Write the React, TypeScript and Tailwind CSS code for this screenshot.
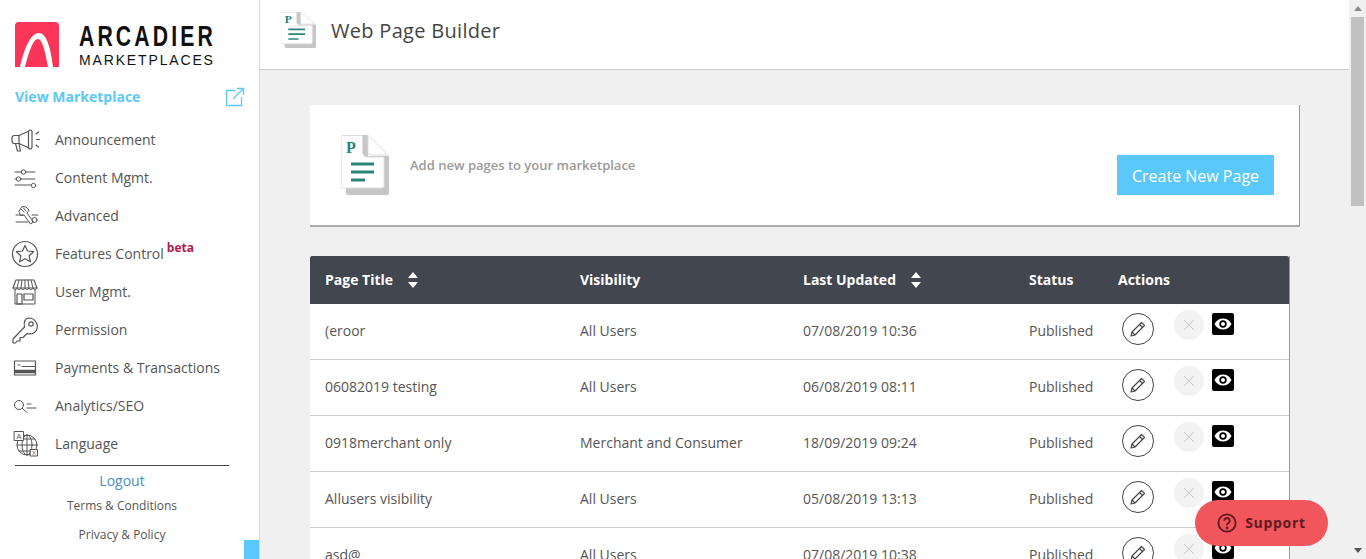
const menu = [
  { label: "Announcement", icon: <Megaphone /> },
  { label: "Content Mgmt.", icon: <Sliders /> },
  { label: "Advanced", icon: <Tools /> },
  { label: "Features Control", icon: <StarBadge />, beta: true },
  { label: "User Mgmt.", icon: <Store /> },
  { label: "Permission", icon: <KeyIcon /> },
  { label: "Payments & Transactions", icon: <CardIcon /> },
  { label: "Analytics/SEO", icon: <Analytics /> },
  { label: "Language", icon: <Globe /> },
];

const rows = [
  { title: "(eroor", visibility: "All Users", updated: "07/08/2019 10:36" },
  { title: "06082019 testing", visibility: "All Users", updated: "06/08/2019 08:11" },
  { title: "0918merchant only", visibility: "Merchant and Consumer", updated: "18/09/2019 09:24" },
  { title: "Allusers visibility", visibility: "All Users", updated: "05/08/2019 13:13" },
  { title: "asd@", visibility: "All Users", updated: "07/08/2019 10:38" },
];

function IconBox({ children }: { children: React.ReactNode }) {
  return (
    <svg width="32" height="32" viewBox="0 0 32 32" fill="none" stroke="#555" strokeWidth="1" strokeLinecap="round" strokeLinejoin="round">
      {children}
    </svg>
  );
}

function Megaphone() {
  return (
    <IconBox>
      <path d="M20.500 6c-1.500 0-1.800 1-2.500 1.500L9 11.500H4.500A2.500 2.500 0 0 0 2 14v3a2.500 2.500 0 0 0 2.500 2.500H9l9 4c.7.5 1 1.500 2.500 1.500 1 0 1.500-1 1.500-2V8c0-1-.5-2-1.500-2z" strokeWidth="1.200" />
      <path d="M9 11.500v8M18.500 7.500v16M5.500 19.500l2 7.500h3l-1.500-7.500" strokeWidth="1.200" />
      <path d="M26 10l2.500-2M26.500 15.500h3M26 21l2.500 2" strokeWidth="1.200" />
    </IconBox>
  );
}

function Sliders() {
  return (
    <IconBox>
      <path d="M5 10h6M16 10h9M5 17h1M11 17h14M5 23h16" />
      <circle cx="13.500" cy="10" r="2.200" />
      <circle cx="8.500" cy="17" r="2.200" />
      <circle cx="23.500" cy="23.500" r="2.200" />
    </IconBox>
  );
}

function Tools() {
  return (
    <IconBox>
      <path d="M9 11l3-4.500 4 .5 3 3-2 3 6.500 9-3 2-6.500-9-3 .5z" />
      <path d="M11 9l3 3M13.500 8l2.500 3M6 15h7M6 22h12M22 15h6" />
      <circle cx="24.500" cy="20" r="2.500" />
    </IconBox>
  );
}

function StarBadge() {
  return (
    <IconBox>
      <circle cx="15" cy="16" r="12.500" strokeWidth="1.200" />
      <path d="M15 7.500l2.600 5.500 6 .7-4.400 4.100 1.200 6-5.400-3-5.400 3 1.200-6-4.400-4.100 6-.7z" strokeWidth="1.200" />
    </IconBox>
  );
}

function Store() {
  return (
    <IconBox>
      <path d="M6 4h18l3 8H3z" strokeWidth="1.100" />
      <path d="M9 4l-2 8M12 4l-1 8M15 4v8M18 4l1 8M21 4l2 8M5 14v14h20V14" />
      <path d="M3 12c0 2 4 2 4 0 0 2 4 2 4 0 0 2 4 2 4 0 0 2 4 2 4 0 0 2 4 2 4 0 0 2 4 2 4 0" />
      <path d="M7 18h5v10H7zM14 18h9v6h-9z" strokeWidth="1.200" />
    </IconBox>
  );
}

function KeyIcon() {
  return (
    <IconBox>
      <path d="M19 4a8.500 8.500 0 0 1 7.500 12c-2 3.500-6 4.500-9.500 3.500L13 23.500h-3V27H7l-1.500 2H3v-4l11.500-12c-1-5 .5-9 4.500-9z" strokeWidth="1.200" />
      <circle cx="21" cy="10" r="2.200" strokeWidth="1.200" />
    </IconBox>
  );
}

function CardIcon() {
  return (
    <IconBox>
      <rect x="4.500" y="9" width="21" height="14" strokeWidth="1.200" />
      <path d="M4 19.500h22" strokeWidth="3.500" strokeLinecap="butt" />
      <path d="M8 13h2M12 14.500h13" />
    </IconBox>
  );
}

function Analytics() {
  return (
    <IconBox>
      <circle cx="9" cy="15" r="4.500" />
      <path d="M12.500 18.500l4.500 4M17 14h4M17 18h9" />
    </IconBox>
  );
}

function Globe() {
  return (
    <IconBox>
      <circle cx="17" cy="17" r="10" />
      <path d="M7 17h20M17 7v20M9 11h16M9 23h16" />
      <ellipse cx="17" cy="17" rx="5" ry="10" />
      <rect x="4.500" y="3.500" width="9" height="9" fill="#fff" />
      <rect x="20.500" y="21.500" width="7" height="6.500" fill="#fff" />
      <text x="9" y="11" fontSize="8" fill="#555" stroke="none" textAnchor="middle" fontFamily="'Open Sans', sans-serif">A</text>
      <text x="24" y="27" fontSize="6" fill="#555" stroke="none" textAnchor="middle" fontFamily="'Open Sans', sans-serif">X</text>
    </IconBox>
  );
}

function PageIcon({ width, height }: { width: number; height: number }) {
  return (
    <svg width={width} height={height} viewBox="0 0 48 60" fill="none" preserveAspectRatio="none">
      <path d="M5 21h43v37a2 2 0 0 1-2 2H7a2 2 0 0 1-2-2z" fill="#c6c6c6" />
      <path d="M20 0h7v22h-7z" fill="#c6c6c6" />
      <path d="M2 .5h19.500V17a5 5 0 0 0 5 5h16.500v29a2 2 0 0 1-2 2H2a2 2 0 0 1-2-2V2.500a2 2 0 0 1 2-2z" fill="#fff" stroke="#ddd" />
      <path d="M27 .5l20 19.500H29.500a2.500 2.500 0 0 1-2.500-2.500z" fill="#fff" stroke="#ddd" />
      <text x="5" y="18" fontSize="16" fontWeight="700" fill="#2b8577" fontFamily="'Liberation Serif', serif">P</text>
      <path d="M10 29h23M10 37h23M10 45h14" stroke="#2b8577" strokeWidth="2.800" />
    </svg>
  );
}

function SortArrows() {
  return (
    <svg width="12" height="18" viewBox="0 0 12 18" fill="#fff">
      <path d="M6 1l5 6H1zM1 11h10l-5 6z" />
    </svg>
  );
}

function Actions() {
  return (
    <div className="flex items-start">
      <div className="mt-[9px] ml-1 flex h-8 w-8 items-center justify-center rounded-full border border-[#444]">
        <svg width="18" height="18" viewBox="0 0 18 18" fill="none" stroke="#444" strokeWidth="1.200" strokeLinejoin="round">
          <path d="M12.500 2.500l3 3L6 15l-4 1 1-4z" />
          <path d="M10.500 4.500l3 3M3 12l3 3" />
        </svg>
      </div>
      <div className="mt-1.5 ml-5 flex h-[30px] w-[30px] items-center justify-center rounded-full bg-[#f2f2f2]">
        <svg width="12" height="12" viewBox="0 0 12 12" stroke="#c4c4c4" strokeWidth="1">
          <path d="M1 1l10 10M11 1L1 11" />
        </svg>
      </div>
      <div className="mt-[9px] ml-2 flex h-[22px] w-[22px] items-center justify-center rounded-[2px] bg-black">
        <svg width="18" height="14" viewBox="0 0 18 14" fill="none">
          <path d="M.5 7C2.500 3.200 5.500 1.500 9 1.500S15.500 3.200 17.500 7c-2 3.800-5 5.500-8.500 5.500S2.500 10.800.5 7z" fill="#fff" />
          <circle cx="9" cy="7" r="3.700" fill="#000" />
          <circle cx="9" cy="7" r="2" fill="#fff" />
        </svg>
      </div>
    </div>
  );
}

export default function App() {
  return (
    <div className="relative flex h-screen overflow-hidden bg-[#f0f0f0] font-['Open_Sans',sans-serif] text-sm text-[#555]">
      {/* Sidebar */}
      <aside className="relative flex w-[260px] shrink-0 flex-col border-r border-[#d8d8d8] bg-white">
        <div className="flex h-[75px] shrink-0 items-start pt-[22px] pl-[15px]">
          <svg width="44" height="45" viewBox="0 0 44 45" className="shrink-0">
            <path d="M4 0h36a4 4 0 0 1 4 4v41H0V4a4 4 0 0 1 4-4z" fill="#fb3558" />
            <path d="M5 45C9 28 15 11 24 11c8 0 12 17 14 34h-5C30 28 27 17 23 17c-5 0-9 13-13 28z" fill="#fff" />
          </svg>
          <div className="ml-5 flex flex-col font-['Liberation_Sans',sans-serif] whitespace-nowrap text-[#111]">
            <span className="mt-[1px] origin-left scale-x-[0.73] text-[29px] leading-[27px] font-bold tracking-[4.300px]">ARCADIER</span>
            <span className="mt-[2px] text-[14px] leading-[16px] tracking-[1.850px]">MARKETPLACES</span>
          </div>
        </div>
        <div className="flex h-[46px] shrink-0 items-center justify-between pr-[14px] pb-[2px] pl-[15px]">
          <span className="font-bold text-[#5ac8fa]">View Marketplace</span>
          <svg width="20" height="20" viewBox="0 0 20 20" fill="none" stroke="#5ac8fa" strokeWidth="1.300">
            <path d="M10 3.500H1.500V18.500H16.500V10M8 12L18.500 1.500M12 1.500h6.500V8" />
          </svg>
        </div>
        <nav className="flex shrink-0 flex-col">
          {menu.map((item) => (
            <div key={item.label} className="flex h-[38px] items-center pl-[10px]">
              <span className="flex w-[45px] shrink-0">{item.icon}</span>
              <span>{item.label}</span>
              {item.beta && <sup className="ml-[3px] text-xs font-bold text-[#b5174e]">beta</sup>}
            </div>
          ))}
        </nav>
        <div className="mx-[15px] mt-[2px] w-[214px] shrink-0 border-t border-[#444] pt-[5px] text-center">
          <div className="leading-5 text-[#4a8fc4]">Logout</div>
          <div className="mt-[5px] text-xs leading-5">Terms &amp; Conditions</div>
          <div className="mt-[9px] text-xs leading-5">Privacy &amp; Policy</div>
        </div>
        <div className="absolute right-0 bottom-0 h-[19px] w-[15px] bg-[#5ac8fa]" />
      </aside>

      {/* Main */}
      <main className="flex min-w-0 flex-1 flex-col overflow-hidden">
        <header className="flex h-[70px] shrink-0 items-start border-b border-[#ccc] bg-white pt-3 pl-[21px]">
          <PageIcon width={35} height={36} />
          <h1 className="mt-[4px] ml-[15px] text-xl leading-[30px] tracking-[0.300px] text-[#444]">Web Page Builder</h1>
        </header>
        <div className="px-[50px] pt-[35px]">
          <section className="flex h-[122px] w-[990px] items-start border-r border-b-2 border-r-[#999] border-b-[#aaa] bg-white">
            <div className="mt-[30px] ml-[31px]">
              <PageIcon width={48} height={60} />
            </div>
            <p className="mt-[51px] ml-[21px] text-[13px] leading-[18px] font-semibold text-[#9a9a9a]">Add new pages to your marketplace</p>
            <button type="button" className="mt-[50px] mr-[25px] ml-auto h-10 w-[157px] bg-[#5ac8fa] pt-[2px] text-base text-white">Create New Page</button>
          </section>
          <section className="mt-[29px] w-[980px] border-r border-[#999] bg-white">
            <div className="grid h-12 grid-cols-[270px_223px_226px_89px_1fr] items-center rounded-t-[2px] bg-[#41464f] font-bold text-white">
              <div className="flex items-center pl-[15px]">Page Title <span className="ml-[14px] flex"><SortArrows /></span></div>
              <div>Visibility</div>
              <div className="flex items-center">Last Updated <span className="ml-[14px] flex"><SortArrows /></span></div>
              <div>Status</div>
              <div>Actions</div>
            </div>
            {rows.map((row) => (
              <div key={row.title} className="grid h-14 grid-cols-[270px_223px_226px_89px_1fr] border-b border-[#ccc]">
                <div className="pt-[17px] pl-[15px] leading-5">{row.title}</div>
                <div className="pt-[17px] leading-5">{row.visibility}</div>
                <div className="pt-[17px] leading-5">{row.updated}</div>
                <div className="pt-[17px] leading-5">Published</div>
                <Actions />
              </div>
            ))}
          </section>
        </div>
      </main>

      {/* Scrollbar */}
      <div className="flex w-[17px] shrink-0 flex-col items-center bg-[#f0f0f0]">
        <div className="mt-[6px] h-0 w-0 border-x-[4px] border-b-[5px] border-x-transparent border-b-[#888]" />
        <div className="mt-[6px] h-[189px] w-[13px] bg-[#c1c1c1]" />
        <div className="mt-auto mb-[6px] h-0 w-0 border-x-[4px] border-t-[5px] border-x-transparent border-t-[#555]" />
      </div>

      {/* Support button */}
      <button type="button" className="absolute top-[500px] left-[1195px] flex h-[46px] w-[133px] items-center justify-center gap-[8px] rounded-full bg-[#f0565c] font-bold tracking-[0.700px] text-[#5f1a1f]">
        <svg width="20" height="20" viewBox="0 0 22 22" fill="none" stroke="#5f1a1f" strokeWidth="2">
          <circle cx="11" cy="11" r="9.500" />
          <path d="M8 8.500a3 3 0 1 1 4.500 2.600c-1 .6-1.500 1-1.500 2.400" />
          <circle cx="11" cy="16.500" r=".6" />
        </svg>
        Support
      </button>
    </div>
  );
}
